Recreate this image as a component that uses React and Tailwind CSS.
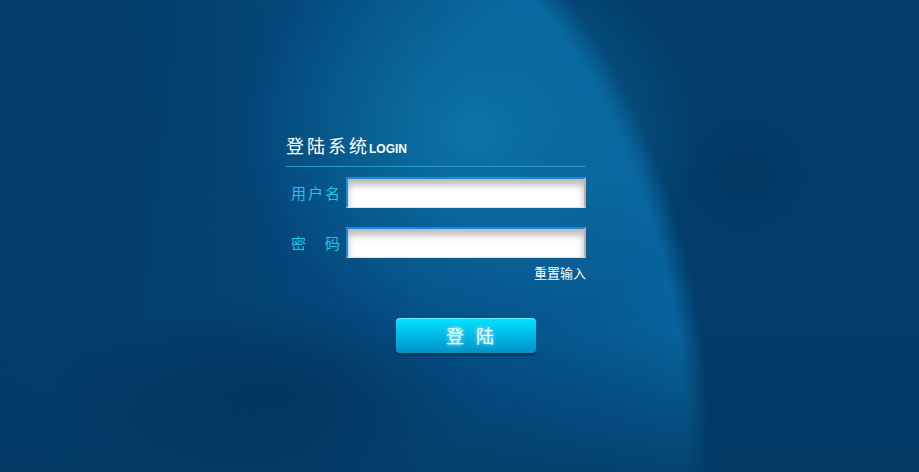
import React from 'react';

const cjk = "font-['Noto_Sans_CJK_SC','Noto_Sans',sans-serif]";

const Label = ({ chars }) => (
  <div className={`w-[49px] ml-[5px] mr-[6px] flex justify-between text-[15px] leading-[20px] text-[#1cc6f0] ${cjk}`}>
    {chars.map((c, i) => <span key={i}>{c}</span>)}
  </div>
);

const Field = ({ chars, type }) => (
  <div className="flex items-center h-[31px]">
    <Label chars={chars} />
    <input
      type={type}
      className="w-[240px] h-[31px] bg-white border-t-2 border-l-2 border-b border-r-2 border-t-[#1b8ade] border-l-[#1b8ade] border-b-[#d5e6ef] border-r-[#b3b3b3] shadow-[inset_0_6px_7px_rgba(0,0,0,0.28)] outline-none px-2 text-sm"
    />
  </div>
);

export default function App() {
  return (
    <div className="w-full h-[472px] overflow-hidden bg-[#023d6b] bg-[radial-gradient(ellipse_230px_200px_at_470px_135px,rgba(14,124,172,0.75)_0%,rgba(14,124,172,0)_100%),radial-gradient(ellipse_60px_55px_at_745px_175px,rgba(1,45,80,0.35)_0%,rgba(1,45,80,0)_100%),radial-gradient(ellipse_220px_100px_at_270px_395px,rgba(1,45,82,0.6)_0%,rgba(1,45,82,0)_100%),linear-gradient(to_top,rgba(3,58,100,0.75)_0%,rgba(3,58,100,0)_30%),linear-gradient(100deg,#033d6b_0%,rgba(3,61,107,0.9)_18%,rgba(3,61,107,0)_48%),radial-gradient(ellipse_480px_636px_at_230px_450px,#04477a_0%,#05518a_55%,#065c94_82%,#07639c_95%,rgba(3,61,107,0)_100%)]">
      <div className="pl-[286px] pt-[132px] w-[586px]">
        <div className="w-[300px] h-[35px] border-b border-[#1f9fc2]">
          <div className="flex items-baseline leading-[26px] text-white">
            <span className={`text-[18px] tracking-[3px] ${cjk}`}>登陆系统</span>
            <span className="text-[12px] font-bold font-['Liberation_Sans',sans-serif] -ml-[1px]">LOGIN</span>
          </div>
        </div>
        <div className="mt-[10px] flex flex-col gap-[19px] w-[300px]">
          <Field chars={['用', '户', '名']} type="text" />
          <Field chars={['密', '码']} type="password" />
        </div>
        <div className={`w-[300px] mt-[8px] text-right text-[13px] leading-[14px] text-white ${cjk}`}>
          重置输入
        </div>
        <button className={`ml-[110px] mt-[38px] w-[140px] h-[35px] rounded-[4px] bg-gradient-to-b from-[#00e6ff] via-[#00b8e6] to-[#0092c8] shadow-[0_3px_0_#04375c,inset_0_1px_0_rgba(255,255,255,0.4)] text-white text-[18px] tracking-[12px] pl-[20px] [text-shadow:0_0_4px_#b8f4ff] ${cjk}`}>
          登陆
        </button>
      </div>
    </div>
  );
}
